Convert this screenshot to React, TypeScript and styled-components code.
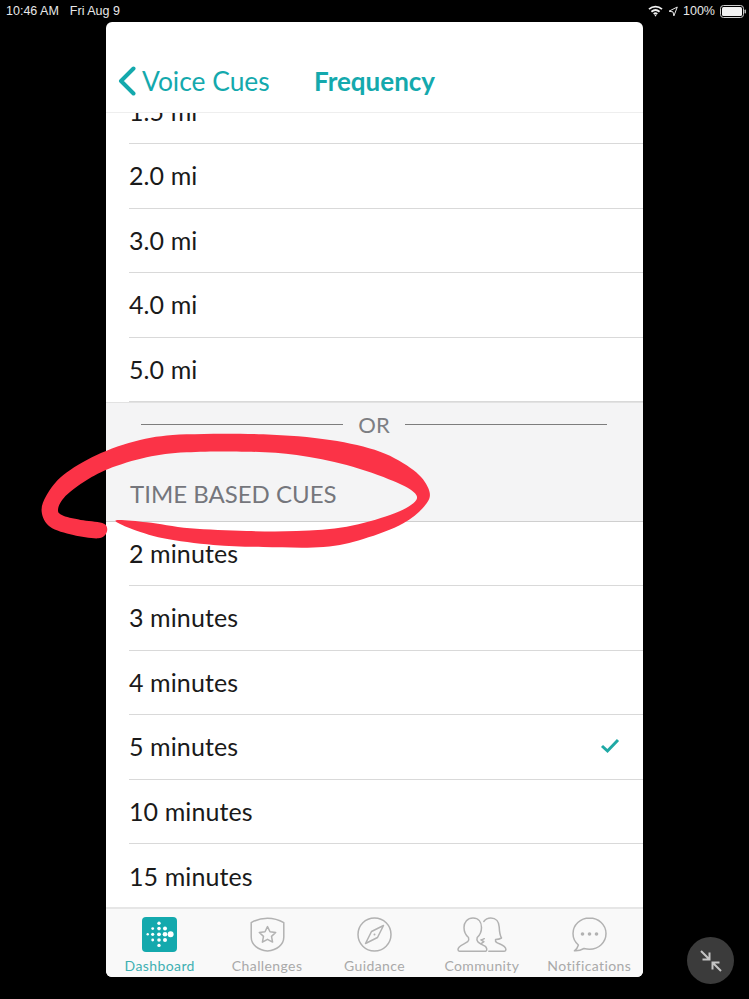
import React from 'react'
import styled, { createGlobalStyle } from 'styled-components'

const TEAL = '#14a9ad'
const ICON_GREY = '#b2b2b2'

const GlobalStyle = createGlobalStyle`
  html, body {
    margin: 0;
    padding: 0;
    background: #000;
  }
  * {
    box-sizing: border-box;
  }
`

const Screen = styled.div`
  position: relative;
  width: 749px;
  height: 999px;
  overflow: hidden;
  background: #000;
  font-family: Lato, 'Open Sans', sans-serif;
`

const StatusBar = styled.div`
  display: flex;
  align-items: center;
  justify-content: space-between;
  height: 22px;
  padding: 0 3px 0 6px;
  color: #e8e8e8;
  font-family: 'Liberation Sans', Arial, sans-serif;
  font-size: 12.5px;
`

const StatusGroup = styled.div`
  display: flex;
  align-items: center;
  gap: ${({ $gap }: { $gap: number }) => $gap}px;
`

const Card = styled.div`
  display: flex;
  flex-direction: column;
  width: 537px;
  height: 955px;
  margin-left: 106px;
  border-radius: 6px;
  overflow: hidden;
  background: #fff;
`

const Header = styled.div`
  display: flex;
  flex: none;
  align-items: center;
  height: 91px;
  padding: 27px 0 0 12px;
  border-bottom: 1px solid #eeeeee;
  color: ${TEAL};
  font-size: 26.4px;
`

const BackLink = styled.div`
  display: flex;
  align-items: center;
  gap: 6px;
  width: 196px;
`

const Title = styled.div`
  font-size: 26px;
  font-weight: 700;
`

const List = styled.div`
  flex: 1;
  min-height: 0;
  overflow: hidden;
`

const Row = styled.div`
  display: flex;
  align-items: center;
  justify-content: space-between;
  height: 64.5px;
  margin-left: 23px;
  padding: 0 23px 1px 0;
  border-bottom: 1px solid #d9d9d9;
  color: #1a1a1a;
  font-size: 25px;
  letter-spacing: 0.1px;
  &:first-child {
    margin-top: -33.5px;
  }
  &:last-child {
    border-bottom: none;
  }
`

const Section = styled.div`
  display: flex;
  flex-direction: column;
  height: 119.5px;
  border-top: 1px solid #e2e2e2;
  border-bottom: 1px solid #cfcfcf;
  background: #f4f4f5;
`

const OrLine = styled.div`
  display: flex;
  align-items: center;
  gap: 15px;
  height: 43px;
  padding: 0 36px 0 35px;
  color: #7d7e83;
  font-size: 22px;
  &::before,
  &::after {
    content: '';
    flex: 1;
    height: 1px;
    background: #7d7d7d;
  }
`

const SectionTitle = styled.div`
  margin-top: 33px;
  padding-left: 24px;
  color: #75767c;
  font-size: 24px;
`

const TabBar = styled.div`
  display: grid;
  flex: none;
  grid-template-columns: repeat(5, 1fr);
  height: 70px;
  padding-top: 8px;
  border-top: 2px solid #e6e6e6;
  background: #f9f9f9;
`

const Tab = styled.div<{ $active?: boolean }>`
  display: flex;
  flex-direction: column;
  align-items: center;
  gap: 5px;
  color: ${({ $active }) => ($active ? '#3fb0b2' : '#a9a9a9')};
  font-size: 14px;
  letter-spacing: 0.4px;
  line-height: 17px;
`

const TabIcon = styled.svg`
  display: block;
  height: 35px;
  fill: none;
  stroke: ${ICON_GREY};
  stroke-width: 1.5;
  stroke-linejoin: round;
  stroke-linecap: round;
`

const Minimize = styled.div`
  position: absolute;
  left: 687px;
  top: 937px;
  display: flex;
  align-items: center;
  justify-content: center;
  width: 47px;
  height: 47px;
  border-radius: 50%;
  background: #3b3b3b;
`

const Scribble = styled.svg`
  position: absolute;
  left: 30px;
  top: 395px;
  width: 420px;
  height: 170px;
  pointer-events: none;
`

// traced from the marker stroke, in 3x crop coordinates
const scribblePoints = [
  [222, 386], [160, 376], [100, 362], [84, 345], [102, 308], [160, 262], [235, 222], [350, 187], [470, 172],
  [650, 170], [800, 180], [950, 210], [1090, 258], [1155, 295], [1150, 325], [1080, 360], [950, 395], [800, 408],
  [650, 408], [480, 400], [350, 382], [258, 376], [300, 400], [400, 430], [550, 450], [700, 456], [880, 456],
  [1000, 432], [1120, 385], [1190, 325], [1195, 280], [1150, 225], [1050, 170], [900, 135], [700, 118], [470, 118],
  [330, 135], [200, 180], [100, 240], [50, 300], [35, 350], [60, 395], [130, 420], [205, 430], [230, 412]
]

const smoothPath = (pts: number[][]) => {
  let d = `M${pts[0][0]} ${pts[0][1]}`
  for (let i = 0; i < pts.length; i++) {
    const p0 = pts[(i - 1 + pts.length) % pts.length]
    const p1 = pts[i]
    const p2 = pts[(i + 1) % pts.length]
    const p3 = pts[(i + 2) % pts.length]
    const c1x = p1[0] + (p2[0] - p0[0]) / 6
    const c1y = p1[1] + (p2[1] - p0[1]) / 6
    const c2x = p2[0] - (p3[0] - p1[0]) / 6
    const c2y = p2[1] - (p3[1] - p1[1]) / 6
    d += ` C${c1x} ${c1y} ${c2x} ${c2y} ${p2[0]} ${p2[1]}`
  }
  return d + 'Z'
}

const logoDots = [
  [5.7, 17.3, 1.2],
  [10.7, 11.6, 1.4], [10.7, 17.3, 1.6], [10.7, 23, 1.4],
  [17, 6.2, 1.7], [17, 11.6, 1.8], [17, 17.3, 1.9], [17, 23, 1.8], [17, 28.4, 1.7],
  [23, 11.6, 2], [23, 17.3, 2.3], [23, 23, 2],
  [28.6, 17.3, 3]
]

const DashboardIcon = () => (
  <TabIcon viewBox="0 0 35 35" width="35">
    <rect width="35" height="35" rx="4" fill={TEAL} stroke="none" />
    {logoDots.map(([cx, cy, r]) => (
      <circle key={`${cx}-${cy}`} cx={cx} cy={cy} r={r} fill="#fff" stroke="none" />
    ))}
  </TabIcon>
)

const ChallengesIcon = () => (
  <TabIcon viewBox="0 0 35 35" width="35">
    <path d="M1.2 5.6C6 2.8 11.5 1.2 17.5 1.2s11.500 1.600 16.300 4.400V20c0 8-7 12.800-16.300 14C8.200 32.800 1.200 28 1.200 20Z" />
    <path d="M17.500 9.600l2.500 5.200 5.700.7-4.200 3.900 1.100 5.700-5.100-2.800-5.100 2.800 1.100-5.700-4.200-3.900 5.700-.7Z" />
  </TabIcon>
)

const GuidanceIcon = () => (
  <TabIcon viewBox="0 0 35 35" width="35">
    <circle cx="17.500" cy="17.500" r="16.500" />
    <path d="M26.500 8.500L20.500 20.500 8.500 26.500 14.500 14.500Z" />
    <circle cx="17.500" cy="17.500" r="1" fill={ICON_GREY} stroke="none" />
  </TabIcon>
)

const CommunityIcon = () => (
  <TabIcon viewBox="0 0 50 35" width="50">
    <path d="M16 1C10.500 1 7 5 7 10.500c0 4 1.600 7.500 4.500 10 .5 1.500.3 3.200-.8 4.200C7 27.500 1 28.500 1 32.500c0 1 .5 1.700 1.500 1.700h26.500c1.400-1 .8-3.800-1-5-2.500-1.500-5.700-2.500-7.200-4.500-1-1.200-1.100-2.800-.6-4.200 2.800-2.500 4.300-6 4.300-10C24.500 5 21.500 1 16 1Z" />
    <path d="M26.800 4.500C28.300 2.300 30.800 1 33.800 1c5.200 0 8.200 3.800 8.400 9 .2 4.700.8 8.500 2.300 11-1.800 1-4 1.500-6 1.600-.3 1.200.2 2.300 1.400 3 2.500 1.500 9 2.600 9 6.900 0 1-.6 1.700-1.500 1.700H31.800" />
    <path d="M27.300 21.700c-1 .6-2.200 1-3.400 1.200l3 1.800-2.700 2" />
  </TabIcon>
)

const NotificationsIcon = () => (
  <TabIcon viewBox="0 0 35 35" width="35">
    <path d="M17.500 1C8.400 1 1 7.900 1 16.500c0 4.600 2 8.600 5.400 11.500-.6 2.300-2 4.300-4 5.800 3.400.3 6.800-.7 9.600-2.300 1.700.5 3.500.8 5.500.8 9.100 0 16.500-7 16.500-15.800S26.600 1 17.500 1Z" />
    <circle cx="10.500" cy="17" r="1.800" fill={ICON_GREY} stroke="none" />
    <circle cx="17.500" cy="17" r="1.800" fill={ICON_GREY} stroke="none" />
    <circle cx="24.500" cy="17" r="1.800" fill={ICON_GREY} stroke="none" />
  </TabIcon>
)

const tabs = [
  { label: 'Dashboard', Icon: DashboardIcon, active: true },
  { label: 'Challenges', Icon: ChallengesIcon },
  { label: 'Guidance', Icon: GuidanceIcon },
  { label: 'Community', Icon: CommunityIcon },
  { label: 'Notifications', Icon: NotificationsIcon }
]

const distances = ['1.5 mi', '2.0 mi', '3.0 mi', '4.0 mi', '5.0 mi']
const times = ['2 minutes', '3 minutes', '4 minutes', '5 minutes', '10 minutes', '15 minutes']

export default function App() {
  return (
    <Screen>
      <GlobalStyle />
      <StatusBar>
        <StatusGroup $gap={11}>
          <span>10:46 AM</span>
          <span>Fri Aug 9</span>
        </StatusGroup>
        <StatusGroup $gap={5}>
          <svg width="15" height="12" viewBox="0 0 15 12" fill="none" stroke="#f0f0f0" strokeWidth="1.800">
            <path d="M1 4.200C4.800.8 10.200.8 14 4.200" />
            <path d="M3.400 6.800c2.500-2.200 5.700-2.200 8.200 0" />
            <path d="M5.700 9c1.100-.9 2.500-.9 3.600 0" />
            <circle cx="7.500" cy="10.600" r=".8" fill="#f0f0f0" stroke="none" />
          </svg>
          <svg width="10" height="11" viewBox="0 0 10 11" fill="none" stroke="#e8e8e8" strokeWidth="1">
            <path d="M9.300 1L1 5.200l4 .7.900 4Z" />
          </svg>
          <span>100%</span>
          <svg width="26" height="13" viewBox="0 0 26 13">
            <rect x=".5" y=".5" width="23" height="12" rx="3" fill="none" stroke="#cfcfcf" />
            <rect x="2" y="2" width="20" height="9" rx="1.500" fill="#f4f4f4" />
            <rect x="24.500" y="4.500" width="1.500" height="4" rx=".7" fill="#bdbdbd" />
          </svg>
        </StatusGroup>
      </StatusBar>
      <Card>
        <Header>
          <BackLink>
            <svg width="18" height="30" viewBox="0 0 18 30" fill="none" stroke={TEAL} strokeWidth="4" strokeLinecap="round" strokeLinejoin="round">
              <path d="M15.500 2.500L3 15l12.500 12.500" />
            </svg>
            <span>Voice Cues</span>
          </BackLink>
          <Title>Frequency</Title>
        </Header>
        <List>
          {distances.map(d => (
            <Row key={d}>{d}</Row>
          ))}
          <Section>
            <OrLine>OR</OrLine>
            <SectionTitle>TIME BASED CUES</SectionTitle>
          </Section>
          {times.map(t => (
            <Row key={t}>
              {t}
              {t === '5 minutes' && (
                <svg width="20" height="16" viewBox="0 0 20 16" fill="none" stroke="#1fa9a5" strokeWidth="3">
                  <path d="M2 8l5.500 5L18 2" />
                </svg>
              )}
            </Row>
          ))}
        </List>
        <TabBar>
          {tabs.map(({ label, Icon, active }) => (
            <Tab key={label} $active={active}>
              <Icon />
              {label}
            </Tab>
          ))}
        </TabBar>
      </Card>
      <Scribble viewBox="0 0 1260 510">
        <path d={smoothPath(scribblePoints)} fill="#fb3347" />
      </Scribble>
      <Minimize>
        <svg width="24" height="24" viewBox="0 0 24 24" fill="none" stroke="#c4c4c4" strokeWidth="2">
          <path d="M2 2l8.500 8.500M3.500 10.500h7v-7" />
          <path d="M22 22l-8.500-8.500M20.500 13.500h-7v7" />
        </svg>
      </Minimize>
    </Screen>
  )
}
